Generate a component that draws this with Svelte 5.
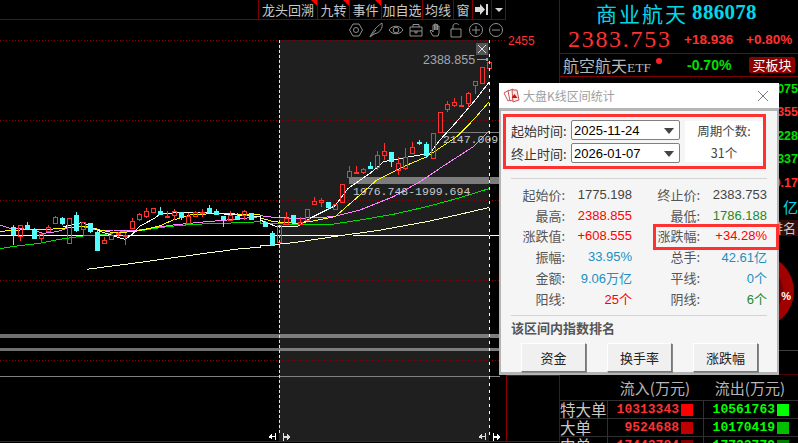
<script>

    // Toolbar tabs, width in px
    const tabs = [
        { label: "龙头回溯", width: 60, flag: true },
        { label: "九转", width: 32, flag: true },
        { label: "事件", width: 32, flag: true },
        { label: "加自选", width: 41, flag: false },
        { label: "均线", width: 31, flag: false },
        { label: "窗", width: 19, flag: false }
    ];

    // Candles: x, wick top, body top, body bottom, wick bottom (page px)
    const z7 = [
        [40,165,170,192,225,"c"],[61,165,165,198,213,"r"],[82,155,165,178,178,"c"],[103,175,180,203,203,"c"],
        [124,190,192,203,220,"r"],[145,165,172,182,185,"r"],[166,138,141,159,162,"r"],[187,140,145,160,165,"c"],
        [208,145,145,218,218,"r"],[229,126,135,180,185,"c"],[250,157,157,178,195,"r"],[271,158,160,183,190,"c"],
        [292,180,186,240,243,"c"],[313,200,210,218,222,"r"],[334,190,195,207,208,"r"],[355,185,188,189,200,"r"],
        [376,190,195,197,225,"r"],[397,145,153,173,175,"r"],[418,130,133,148,152,"r"],[439,115,123,138,145,"r"],
        [460,114,115,125,128,"r"],[481,110,123,133,135,"c"],[502,122,138,140,143,"r"],[523,118,122,135,150,"r"],
        [544,125,127,142,150,"c"],[565,130,138,160,160,"r"],[586,122,125,138,142,"r"],[607,117,125,128,140,"r"],
        [628,105,114,127,128,"c"],[649,117,123,132,135,"c"],[670,138,138,147,170,"c"],[691,122,135,150,152,"r"],
        [712,130,137,147,150,"c"],[733,120,123,135,150,"r"],[754,128,128,146,150,"c"]
    ];
    const z9 = [
        [15,168,172,182,186,"c"],[37,197,205,240,243,"c"],[58,180,180,230,230,"r"],[79,142,158,176,178,"r"],
        [100,150,150,172,175,"c"],[121,155,170,177,180,"r"],[142,132,132,165,165,"r"],[163,95,108,118,120,"r"],
        [184,98,105,112,125,"r"],[205,110,112,125,135,"c"],[226,118,118,133,135,"r"],[247,57,57,112,115,"r"],
        [268,3,18,35,36,"r"],[289,3,20,22,25,"r"],[310,8,13,22,28,"r"]
    ];
    const z8 = [
        [331,367,378,385,388,"c"],[352,332,344,382,390,"r"],[373,308,332,346,360,"r"],[394,335,336,362,382,"c"],
        [415,352,368,390,405,"r"],[436,325,350,385,390,"r"],[457,307,322,338,340,"r"],[478,300,306,310,315,"c"],
        [499,305,312,344,355,"c"],[520,280,280,355,355,"r"],[541,216,216,275,278,"r"],[562,182,192,208,215,"r"],
        [583,175,185,194,200,"r"],[604,168,196,198,200,"r"],[625,155,160,190,203,"r"],[646,122,124,136,162,"r"],
        [667,80,80,128,132,"r"],[688,65,65,85,85,"r"]
    ];

    // Scale a measured set down to page px
    const toCandles = (list, ox, oy) => list.map((c) => ({
        x: Math.round(ox + c[0] / 3) + 0.5,
        hi: oy + c[1] / 3,
        top: Math.round(oy + c[2] / 3) + 0.5,
        bot: Math.round(oy + c[3] / 3) + 0.5,
        lo: oy + c[4] / 3,
        up: c[5] === "r"
    }));

    const candles = [...toCandles(z7, 0, 170), ...toCandles(z9, 260, 165), ...toCandles(z8, 260, 40)];

    const line = (parts) => parts.map(([pts, ox, oy]) =>
        pts.map((p) => `${(ox + p[0] / 3).toFixed(1)},${(oy + p[1] / 3).toFixed(1)}`).join(" ")
    ).join(" ");

    // Moving averages
    const averages = [
        { color: "#ffffc8", points: line([
            [[[260,298],[400,280],[600,252],[720,236],[780,232]], 0, 170],
            [[[0,243],[100,233],[240,212],[350,197],[500,170],[600,148],[690,127]], 260, 165]
        ]) },
        { color: "#00e000", points: line([
            [[[0,236],[50,228],[120,220],[180,208],[250,198],[300,195],[360,186],[420,182],[500,170],[580,163],[720,158],[780,155]], 0, 170],
            [[[0,175],[100,178],[215,178],[300,165],[400,148],[500,125],[600,98],[690,70]], 260, 165]
        ]) },
        { color: "#ff80ff", points: line([
            [[[0,165],[30,175],[90,178],[130,190],[170,185],[210,172],[250,170],[290,180],[340,180],[400,183],[450,175],[520,165],[600,157],[680,150],[780,140]], 0, 170],
            [[[0,152],[50,158],[120,160],[220,155],[300,135],[400,95],[480,50],[550,3]], 260, 165],
            [[[640,320],[688,272]], 260, 40]
        ]) },
        { color: "#ffff00", points: line([
            [[[0,184],[60,180],[150,178],[220,172],[260,168],[300,180],[340,188],[400,185],[450,175],[480,167],[520,150],[570,135],[650,130],[780,135]], 0, 170],
            [[[0,158],[40,170],[110,175],[160,168],[225,155],[300,90],[350,45],[430,5]], 260, 165],
            [[[500,350],[590,290],[640,240],[688,185]], 260, 40]
        ]) },
        { color: "#ffffff", points: line([
            [[[190,170],[250,157],[290,180],[340,198],[375,208],[395,195],[420,168],[460,147],[480,133],[530,128],[620,128],[780,140]], 0, 170],
            [[[0,165],[50,185],[110,185],[150,160],[225,122],[265,70],[330,25],[360,0]], 260, 165],
            [[[370,365],[450,350],[510,340],[540,300],[590,245],[650,175],[688,125]], 260, 40]
        ]) }
    ];

    const dotted = [40, 120, 200, 280, 360];

    // Values that stick out beside the dialog
    const ticks = [
        { text: "4075", tone: "green" },
        { text: "8355", tone: "red" },
        { text: "5228", tone: "green" },
        { text: "1337", tone: "green" },
        { text: "0.17", tone: "red" },
        { text: "亿", tone: "cyan" }
    ];

    const stats = [
        ["起始价:", "1775.198", "dark", "终止价:", "2383.753", "dark"],
        ["最高:", "2388.855", "red", "最低:", "1786.188", "green"],
        ["涨跌值:", "+608.555", "red", "涨跌幅:", "+34.28%", "red"],
        ["振幅:", "33.95%", "blue", "总手:", "42.61亿", "blue"],
        ["金额:", "9.06万亿", "blue", "平线:", "0个", "blue"],
        ["阳线:", "25个", "red", "阴线:", "6个", "green"]
    ];

    const flows = [
        { name: "特大单", buy: "10313343", sell: "10561763", buyTone: "#ff0000", sellTone: "#00ff00" },
        { name: "大单", buy: "9524688", sell: "10170419", buyTone: "#c00000", sellTone: "#00c000" },
        { name: "中单", buy: "17443784", sell: "17732779", buyTone: "#800000", sellTone: "#008000" }
    ];

</script>

<div class="app">

    <!-- Chart column -->
    <div class="chart">

        <!-- Tabs -->
        <div class="tabs">
            {#each tabs as tab}
                <div class="tab" class:flag={tab.flag} style="width: {tab.width}px">{tab.label}</div>
            {/each}
            <div class="tab jump" style="width: 19px">
                <svg width="15" height="11" viewBox="0 0 15 11"><path d="M0 3h5V0l5 5.5-5 5.5V8H0z" fill="#d8d8d8"/><rect x="11" y="0" width="2" height="11" fill="#d8d8d8"/></svg>
            </div>
            <div class="tab drop" style="width: 14px"><i></i></div>
        </div>

        <!-- Plot -->
        <div class="stage">

            <svg class="plot" width="559" height="423" viewBox="0 20 559 423" shape-rendering="crispEdges">

                <!-- Selected range -->
                <rect x="279" y="40" width="210" height="401" fill="#1f1f1f" />

                {#each dotted as y}
                    <line x1="0" x2="505" y1={y + 0.5} y2={y + 0.5} stroke="#900000" stroke-dasharray="1 2" />
                {/each}

                <!-- Price levels -->
                <rect x="349" y="177" width="151" height="7" fill="#7d7d7d" />
                <line x1="440" x2="500" y1="132.5" y2="132.5" stroke="#808080" />
                <rect x="0" y="334" width="279" height="4" fill="#707070" />
                <rect x="279" y="334" width="221" height="4" fill="#7d7d7d" />
                <rect x="0" y="348" width="279" height="3" fill="#707070" />
                <rect x="279" y="348" width="221" height="3" fill="#7d7d7d" />
                <line x1="0" x2="500" y1="376.5" y2="376.5" stroke="#808080" />
                <line x1="0" x2="340" y1="235.5" y2="235.5" stroke="#ffffff" />
                <line x1="340" x2="353" y1="235.5" y2="235.5" stroke="#101040" />
                <line x1="353" x2="500" y1="235.5" y2="235.5" stroke="#ffffff" />

                <!-- Moving averages -->
                {#each averages as avg}
                    <polyline points={avg.points} fill="none" stroke={avg.color} stroke-width="1" />
                {/each}

                <!-- Candles -->
                {#each candles as c}
                    <line x1={c.x} x2={c.x} y1={c.hi} y2={c.top} stroke={c.up ? "#ff3232" : "#54fcfc"} />
                    <line x1={c.x} x2={c.x} y1={c.bot} y2={c.lo} stroke={c.up ? "#ff3232" : "#54fcfc"} />
                    {#if c.up}
                        <rect x={c.x - 2} y={c.top} width="4" height={Math.max(c.bot - c.top, 1)} fill="none" stroke="#ff3232" />
                    {:else}
                        <rect x={c.x - 2.5} y={c.top - 0.5} width="5" height={Math.max(c.bot - c.top + 1, 1)} fill="#54fcfc" />
                    {/if}
                {/each}

                <!-- Range edges -->
                <line x1="279.5" x2="279.5" y1="40" y2="435" stroke="#ffff00" stroke-dasharray="3 2" />
                <line x1="489.5" x2="489.5" y1="40" y2="435" stroke="#0000e0" />
                <line x1="489.5" x2="489.5" y1="40" y2="435" stroke="#ffffff" stroke-dasharray="3 4" />

                <!-- Drag handles -->
                <g fill="#ffffff">
                    <path d="M268 437l4-3v2h3v-3h1v7h-1v-3h-3v2z" />
                    <path d="M283 433h1v3h3v-2l4 3-4 3v-2h-3v3h-1z" opacity=".85" />
                    <path d="M478 437l4-3v2h3v-3h1v7h-1v-3h-3v2z" opacity=".85" />
                    <path d="M493 433h1v3h3v-2l4 3-4 3v-2h-3v3h-1z" />
                </g>

                <!-- Frames -->
                <line x1="0" x2="559" y1="441.5" y2="441.5" stroke="#900000" />
                <line x1="506.5" x2="506.5" y1="376" y2="441" stroke="#900000" />
                <line x1="506" x2="559" y1="375.5" y2="375.5" stroke="#900000" />

                <!-- Labels -->
                <text class="axis" x="508" y="45">2455</text>
                <text class="mark" x="423" y="64">2388.855</text>
                <line x1="477" x2="487" y1="59.5" y2="59.5" stroke="#a0a0a0" />
                <circle cx="487" cy="59.5" r="1.5" fill="#a0a0a0" />
                <text class="level" x="443" y="143">2147.009</text>
                <text class="level" x="353" y="195">1976.748-1999.694</text>

                <!-- Range close -->
                <rect x="476" y="43" width="12" height="12" fill="#555555" />
                <path d="M478 45l8 8M486 45l-8 8" stroke="#e0e0e0" fill="none" shape-rendering="auto" />

            </svg>

            <!-- Chart tools -->
            <div class="tools">
                <svg viewBox="0 0 16 16"><path d="M5 2h6l3.500 6-3.500 6H5L1.500 8z" /><circle cx="8" cy="8" r="2.500" /></svg>
                <svg viewBox="0 0 16 16"><path d="M2 15C4 10 8 5 14 1c1 5-2 10-8 11zM2 15l6-7" /></svg>
                <svg viewBox="0 0 16 16"><path d="M1 8c3-5 11-5 14 0-3 5-11 5-14 0z" /><circle cx="8" cy="8" r="2.800" /></svg>
                <svg viewBox="0 0 16 16"><path d="M2 5h12v9H2zM5 5V2.500h6V5M2 9h12M7 9v2h2V9" /></svg>
                <svg viewBox="0 0 16 16"><path d="M5 14L2 9l1-1 2 2V3h1.500v5V2h1.500v6V2.500h1.500V8V4h1.500v7l-1 3z" /></svg>
                <svg viewBox="0 0 16 16"><path d="M3 7h10v8H3zM5 7V4c0-3 5-3 6-1" /></svg>
                <svg viewBox="0 0 16 16"><circle cx="8" cy="8" r="6.500" /><path d="M4 8h8M8 4v8" /></svg>
                <svg viewBox="0 0 16 16"><circle cx="8" cy="8" r="6.500" /><path d="M4 8h8" /></svg>
            </div>

        </div>

    </div>

    <!-- Side column -->
    <div class="side">

        <div class="title"><span>商业航天</span> <b>886078</b></div>

        <div class="price">
            <span class="last">2383.753</span>
            <span class="change">+18.936</span>
            <span class="change">+0.80%</span>
        </div>

        <div class="etf">
            <span class="etf-name">航空航天<em>ETF</em></span><i class="dot"></i>
            <span class="etf-change">-0.70%</span>
            <span class="buy">买板块</span>
        </div>

        <div class="ticks">
            {#each ticks as tick}
                <div class="tick {tick.tone}">{tick.text}</div>
            {/each}
            <div class="rank">排名</div>
            <div class="pie">
                <svg width="76" height="76" viewBox="0 0 76 76">
                    <circle cx="38" cy="38" r="37" fill="#a00000" />
                    <circle cx="38" cy="38" r="26" fill="#700000" />
                </svg>
                <span>%</span>
            </div>
        </div>

        <!-- Money flow -->
        <div class="flow">
            <div class="flow-head"><span></span><span>流入(万元)</span><span>流出(万元)</span></div>
            {#each flows as row}
                <div class="flow-row">
                    <div class="flow-name">{row.name}</div>
                    <div class="flow-cell in">{row.buy}<i style="background: {row.buyTone}"></i></div>
                    <div class="flow-cell out">{row.sell}<i style="background: {row.sellTone}"></i></div>
                </div>
            {/each}
        </div>

    </div>

    <!-- Range statistics dialog -->
    <div class="dialog">

        <div class="dialog-title">
            <svg width="17" height="16" viewBox="0 0 17 16">
                <path d="M1 5l5-3 3 9-4 2z" fill="#fff" stroke="#d05050" />
                <path d="M5 3l5-2 2 10-5 2z" fill="#fff" stroke="#d05050" />
                <path d="M9 2l5 0 2 10-6 2z" fill="#fbe8e8" stroke="#d05050" />
                <path d="M11.500 6l3 4h-6z" fill="#c81010" />
            </svg>
            <span>大盘K线区间统计</span>
            <svg class="close" width="12" height="12" viewBox="0 0 12 12"><path d="M1 1l10 10M11 1L1 11" stroke="#808080" fill="none" /></svg>
        </div>

        <div class="dialog-body">

            <!-- Date range -->
            <div class="range">
                <div class="dates">
                    <div class="date">
                        <label for="date-start">起始时间:</label>
                        <div class="select" id="date-start">2025-11-24<i></i></div>
                    </div>
                    <div class="date">
                        <label for="date-end">终止时间:</label>
                        <div class="select" id="date-end">2026-01-07<i></i></div>
                    </div>
                </div>
                <div class="count">
                    <div>周期个数:</div>
                    <div>31个</div>
                </div>
            </div>

            <!-- Stats -->
            <div class="stats">
                {#each stats as row}
                    <div class="stat-label">{row[0]}</div>
                    <div class="stat-value {row[2]}">{row[1]}</div>
                    <div class="stat-label">{row[3]}</div>
                    <div class="stat-value {row[5]}">{row[4]}</div>
                {/each}
                <div class="highlight"></div>
            </div>

            <!-- Ranking -->
            <div class="ranking">
                <div class="ranking-title">该区间内指数排名</div>
                <div class="buttons">
                    <button>资金</button>
                    <button>换手率</button>
                    <button>涨跌幅</button>
                </div>
            </div>

        </div>

    </div>

</div>

<style>

    :global(body) {
        margin: 0;
        background: #000;
    }

    .app {
        position: relative;
        display: grid;
        grid-template-columns: 559px 239px;
        width: 798px;
        height: 443px;
        overflow: hidden;
        background: #000;
        color: #c8c8c8;
        font-family: "Noto Sans CJK SC", "Liberation Sans", sans-serif;
    }

    /* Chart */
    .chart {
        display: flex;
        flex-direction: column;
    }

    .tabs {
        display: flex;
        justify-content: flex-end;
        width: 506px;
        height: 19px;
        border-bottom: 1px solid #800000;
        flex: none;
    }

    .tab {
        position: relative;
        display: flex;
        align-items: center;
        justify-content: center;
        border-right: 1px solid #800000;
        font-size: 13px;
        line-height: 19px;
        white-space: nowrap;
        box-sizing: border-box;
    }

    .tab:first-child {
        border-left: 1px solid #800000;
    }

    .flag::after {
        content: "";
        position: absolute;
        top: 0;
        right: 0;
        border-top: 6px solid #ff0000;
        border-left: 6px solid transparent;
    }

    .drop i {
        border-top: 4px solid #d8d8d8;
        border-left: 4px solid transparent;
        border-right: 4px solid transparent;
    }

    .stage {
        position: relative;
        flex: 1;
    }

    .plot {
        display: block;
    }

    .plot text {
        font-family: "Liberation Mono", monospace;
    }

    .plot .axis {
        font-family: "Liberation Sans", sans-serif;
        font-size: 12px;
        fill: #ff3232;
    }

    .plot .mark {
        font-family: "Liberation Sans", sans-serif;
        font-size: 12.500px;
        fill: #a0a8b0;
    }

    .plot .level {
        font-size: 11.500px;
        fill: #c8c8c8;
    }

    .tools {
        position: absolute;
        top: 2px;
        left: 348px;
        display: flex;
        gap: 4px;
    }

    .tools svg {
        width: 16px;
        height: 16px;
        fill: none;
        stroke: #909090;
        stroke-width: 1;
    }

    /* Side */
    .side {
        display: flex;
        flex-direction: column;
        border-left: 1px solid #800000;
        box-sizing: border-box;
    }

    .title {
        display: flex;
        align-items: center;
        justify-content: center;
        gap: 4px;
        height: 25px;
        padding-right: 5px;
        color: #00d8e8;
        flex: none;
    }

    .title span {
        font-size: 21px;
        letter-spacing: 2px;
    }

    .title b {
        font-family: "Liberation Serif", serif;
        font-size: 21px;
        letter-spacing: .3px;
    }

    .price {
        display: flex;
        align-items: center;
        height: 29px;
        padding-left: 8px;
        border-bottom: 1px solid #800000;
        color: #ff3232;
        box-sizing: border-box;
        flex: none;
    }

    .last {
        flex: none;
        width: 116px;
        font-family: "Liberation Serif", serif;
        font-size: 24px;
        letter-spacing: 1.700px;
    }

    .change {
        flex: none;
        width: 62px;
        font-family: "Liberation Sans", sans-serif;
        font-size: 13.500px;
        font-weight: bold;
    }

    .change:last-child {
        width: 50px;
    }

    .etf {
        position: relative;
        display: flex;
        align-items: center;
        height: 23px;
        padding-left: 3px;
        border-bottom: 1px solid #800000;
        box-sizing: border-box;
        flex: none;
    }

    .etf-name {
        font-size: 16px;
        color: #b8b8b8;
        white-space: nowrap;
    }

    .etf-name em {
        font-family: "Liberation Serif", serif;
        font-size: 13.500px;
        font-style: normal;
    }

    .dot {
        width: 6px;
        height: 6px;
        margin: -9px 0 0 5px;
        border-radius: 50%;
        background: #ff2020;
    }

    .etf-change {
        margin-left: 25px;
        color: #00e000;
        font-family: "Liberation Sans", sans-serif;
        font-size: 14px;
        font-weight: bold;
    }

    .buy {
        margin-left: auto;
        margin-right: 3px;
        width: 46px;
        height: 16px;
        line-height: 16px;
        border-radius: 2px;
        background: #8c0000;
        color: #fff;
        font-size: 13px;
        text-align: center;
    }

    .ticks {
        position: relative;
        flex: 1;
        padding-top: 1px;
        display: flex;
        flex-direction: column;
        align-items: flex-end;
        border-bottom: 1px solid #500000;
        font-family: "Liberation Sans", sans-serif;
        font-size: 12.500px;
        font-weight: bold;
    }

    /* Rule under the gauge */
    .ticks::after {
        content: "";
        position: absolute;
        left: 0;
        right: 0;
        bottom: 23px;
        height: 1px;
        background: #404040;
    }

    .tick {
        height: 23.400px;
        line-height: 23px;
    }

    .tick.cyan {
        font-family: "Noto Sans CJK SC", sans-serif;
        font-size: 15px;
        font-weight: normal;
    }

    .rank {
        width: 60px;
        height: 16px;
        margin-top: 2px;
        padding-right: 2px;
        background: #300c0c;
        color: #c8c8c8;
        font-family: "Noto Sans CJK SC", sans-serif;
        font-size: 13px;
        font-weight: normal;
        line-height: 16px;
        text-align: right;
        box-sizing: border-box;
    }

    .pie {
        position: absolute;
        top: 176px;
        left: 159px;
        width: 76px;
        height: 76px;
    }

    .pie svg {
        display: block;
    }

    .pie span {
        position: absolute;
        top: 36px;
        right: 4px;
        color: #fff;
        font-size: 11px;
        line-height: 14px;
    }

    .green { color: #00e000; }
    .red { color: #ff3232; }
    .cyan { color: #00d8e8; }
    .dark { color: #444; }
    .blue { color: #2090c0; }

    .flow {
        height: 68px;
        flex: none;
        overflow: hidden;
    }

    .flow-head {
        display: grid;
        grid-template-columns: 47px 96px 95px;
        height: 25px;
        color: #b8b8b8;
        font-size: 15px;
        line-height: 25px;
        text-align: right;
        white-space: nowrap;
    }

    .flow-head span:last-child {
        padding-right: 13px;
    }

    .flow-head span:nth-child(2) {
        padding-right: 13px;
    }

    .flow-row {
        display: grid;
        grid-template-columns: 47px 96px 95px;
        height: 18px;
        border-top: 1px solid #303030;
        box-sizing: border-box;
    }

    .flow-name {
        font-size: 15.500px;
        line-height: 17px;
        white-space: nowrap;
    }

    .flow-cell {
        display: flex;
        align-items: center;
        justify-content: flex-end;
        gap: 2px;
        padding-right: 10px;
        border-left: 1px solid #303030;
        font-family: "Liberation Mono", monospace;
        font-size: 13px;
        font-weight: bold;
    }

    .flow-cell.out {
        padding-right: 9px;
    }

    .flow-cell i {
        width: 12px;
        height: 12px;
    }

    .in { color: #ff3232; }
    .out { color: #00ff00; }

    /* Dialog */
    .dialog {
        position: absolute;
        top: 83px;
        left: 499px;
        display: flex;
        flex-direction: column;
        width: 280px;
        height: 292px;
        background: #f5f5f5;
        color: #444;
        box-sizing: border-box;
        font-size: 13px;
    }

    .dialog-title {
        display: flex;
        align-items: center;
        gap: 3px;
        height: 25px;
        padding: 0 10px 0 4px;
        background: #fff;
        color: #a0a0a0;
        font-size: 12px;
        flex: none;
    }

    .close {
        margin-left: auto;
    }

    .dialog-body {
        flex: 1;
        display: flex;
        flex-direction: column;
        border: solid #b4b4b4;
        border-width: 3px 2px 3px 2px;
        padding: 3px 2px 0;
        box-sizing: border-box;
    }

    .range {
        display: flex;
        align-items: center;
        height: 55px;
        padding: 0 0 0 5px;
        border: 3px solid #ff3232;
        box-sizing: border-box;
        flex: none;
        width: 263px;
    }

    .dates {
        display: flex;
        flex-direction: column;
        gap: 3px;
    }

    .date {
        display: flex;
        align-items: center;
        gap: 1px;
        color: #333;
    }

    .date label {
        width: 59px;
        white-space: nowrap;
    }

    .select {
        position: relative;
        width: 109px;
        height: 20px;
        padding-left: 2px;
        border: 1px solid #808080;
        border-radius: 2px;
        background: #fff;
        color: #000;
        font-family: "Liberation Sans", sans-serif;
        font-size: 13px;
        line-height: 20px;
        box-sizing: border-box;
    }

    .select i {
        position: absolute;
        top: 7px;
        right: 5px;
        border-top: 6px solid #444;
        border-left: 5px solid transparent;
        border-right: 5px solid transparent;
    }

    .count {
        display: flex;
        flex-direction: column;
        align-items: center;
        justify-content: center;
        gap: 3px;
        width: 78px;
        height: 41px;
        margin-left: 5px;
        background: #fff;
        font-size: 12.500px;
    }

    .stats {
        position: relative;
        display: grid;
        grid-template-columns: 54px 67px 68px 67px;
        grid-auto-rows: 20.800px;
        margin: 9px 0 0 8px;
        padding: 5px 0 6px;
        border: solid #d4d4d4;
        border-width: 1px 0;
        width: 256px;
        align-items: center;
    }

    .stat-label {
        text-align: right;
        white-space: nowrap;
        color: #555;
    }

    .stat-value {
        text-align: right;
        white-space: nowrap;
        font-family: "Liberation Sans", "Noto Sans CJK SC", sans-serif;
        font-size: 13px;
    }

    .stats .red { color: #ff0000; }
    .stats .green { color: #1a8a2a; }

    .highlight {
        position: absolute;
        top: 45px;
        left: 142px;
        width: 126px;
        height: 26px;
        border: 3px solid #ff3232;
        box-sizing: border-box;
    }

    .ranking {
        padding: 3px 0 0 8px;
    }

    .ranking-title {
        font-weight: bold;
        font-size: 13px;
        line-height: 18px;
        color: #555;
    }

    .buttons {
        display: flex;
        gap: 21px;
        margin: 6px 0 0 10px;
    }

    button {
        width: 65px;
        height: 29px;
        padding: 0;
        background: #f0f0f0;
        color: #222;
        font-family: inherit;
        font-size: 13px;
        border: 1px solid;
        border-color: #fff #777 #777 #fff;
        box-shadow: 1px 1px 0 #888;
    }

</style>
